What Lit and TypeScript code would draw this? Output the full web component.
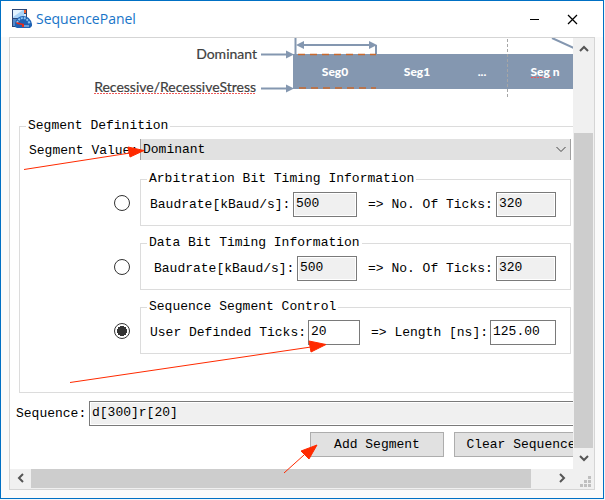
import { LitElement, html, css, svg } from "lit";
import { customElement, state } from "lit/decorators.js";

interface Timing {
  id: string;
  title: string;
  layout: string;
  first: [string, string];
  second: [string, string];
  editable: boolean;
}

const TIMINGS: Timing[] = [
  { id: "arb", title: "Arbitration Bit Timing Information", layout: "arb", first: ["Baudrate[kBaud/s]:", "500"], second: ["=> No. Of Ticks:", "320"], editable: false },
  { id: "data", title: "Data Bit Timing Information", layout: "data", first: ["Baudrate[kBaud/s]:", "500"], second: ["=> No. Of Ticks:", "320"], editable: false },
  { id: "user", title: "Sequence Segment Control", layout: "user", first: ["User Definded Ticks:", "20"], second: ["=> Length [ns]:", "125.00"], editable: true },
];

@customElement("segment-diagram")
class SegmentDiagram extends LitElement {
  static styles = css`
    :host { display: block; height: 70px; }
    svg { display: block; overflow: hidden; }
    .name { font: 14px Lato, "Open Sans", sans-serif; fill: #404040; stroke: #404040; stroke-width: 0.2; text-anchor: end; }
    .seg { font: 900 12px Lato, "Open Sans", sans-serif; fill: #fff; text-anchor: middle; }
    .line { stroke: #8497b0; stroke-width: 2; fill: none; }
    .head, .bar { fill: #8497b0; }
    .dash { stroke: #c8692d; stroke-width: 1.5; stroke-dasharray: 7 5; }
    .split { stroke: #a6a6a6; stroke-dasharray: 3 2; }
    .wave { stroke: #f05a5a; fill: none; stroke-width: 1; stroke-dasharray: 2 1; }
  `;
  render() {
    return html`<svg width="600" height="70" role="img" aria-label="Segment diagram">
      ${svg`
      <rect class="bar" x="283" y="16" width="317" height="35"/>
      <path class="line" stroke-width="1.500" d="M285.500 0V16M366 7V16M290 7H362M251 16.500H278M251 50.500H278M542 0L566 11"/>
      <path class="head" d="M286 7l8-4v8zM367 7l-8-4v8zM284 16.500l-8-4v8zM284 50.500l-8-4v8z"/>
      <path class="dash" d="M288 16.500H366M289 50H366"/>
      <path class="split" d="M497.500 1V60"/>
      <text class="name" x="247" y="21">Dominant</text>
      <text class="name" x="246" y="54">Recessive/RecessiveStress</text>
      <path class="wave" d="M84 55.500H246M521 39.500H541"/>
      <text class="seg" x="325" y="38">Seg0</text>
      <text class="seg" x="407" y="38">Seg1</text>
      <text class="seg" x="472" y="38">...</text>
      <text class="seg" x="535" y="38">Seg n</text>`}
    </svg>`;
  }
}

@customElement("app-root")
class AppRoot extends LitElement {
  @state() private selected = "user";

  static styles = css`
    :host { display: block; height: 100vh; box-sizing: border-box; padding: 0 1px 1px 0; background: #f3f6f9; font: 13px/18px "Liberation Mono", monospace; color: #000; }
    *, *::before, *::after { box-sizing: border-box; }
    button, input, select { font: inherit; color: inherit; margin: 0; border-radius: 0; }
    .window { position: relative; height: 100%; display: flex; flex-direction: column; border: 1px solid #0070c4; background: #fff; overflow: hidden; }
    .titlebar { flex: none; height: 36px; display: flex; align-items: center; padding: 0 12px 0 11px; }
    .appicon { flex: none; width: 21px; height: 21px; }
    .title { flex: 1; margin: 0; padding-left: 3px; font: 14px/20px "Open Sans", sans-serif; color: #1874c8; }
    .winbtn { width: 38px; height: 34px; padding: 0; border: 0; background: none; display: grid; place-items: center; }
    .frame { flex: 1; min-height: 0; padding: 0 8px 8px; background: #fafafa; }
    .panel { height: 100%; display: grid; grid-template: minmax(0, 1fr) 20px / minmax(0, 1fr) 21px; border: 1px solid #d5d5d5; background: #f0f0f0; }
    .view { overflow: hidden; background: #fff; }
    .canvas { width: calc(100% + 30px); }
    fieldset { margin: 0; min-width: 0; border: 1px solid #dcdcdc; }
    legend { padding: 0 2px; height: 18px; }
    .definition { margin: 9px 0 8px 9px; padding: 4px 31px 38px 6px; }
    .settings { display: grid; grid-template-columns: 114px minmax(0, 1fr); row-gap: 8px; align-items: center; }
    .caption { padding-left: 3px; white-space: nowrap; }
    .pick { position: relative; margin-bottom: 2px; }
    .pick select { display: block; width: 100%; height: 21px; padding: 0 2px; border: solid #a0a0a0; border-width: 0 1px; background: #e1e1e1; appearance: none; }
    .pick svg { position: absolute; right: 5px; top: 7px; pointer-events: none; }
    .radio { appearance: none; width: 16px; height: 16px; margin: 9px 10px 0 0; justify-self: end; border: 1px solid #333; border-radius: 50%; background: #fff; }
    .radio:checked { background: radial-gradient(circle, #333 0 5px, #fff 5px); }
    .timing { height: 56px; padding: 4px 6px 8px 9px; }
    .timing legend { margin-left: -3px; }
    .row { display: grid; align-items: center; white-space: nowrap; }
    .arb { grid-template-columns: 143px 64px 139px 60px; }
    .data { grid-template-columns: 143px 60px 139px 60px; padding-left: 4px; }
    .user { grid-template-columns: 158px 52px 130px 66px; }
    .second { margin-left: 11px; }
    .field { width: 100%; height: 25px; padding: 0 2px 2px; border: 1px solid #7a7a7a; background: #fff; outline: 0; }
    .field[readonly] { background: #f0f0f0; box-shadow: inset 0 0 0 1px #fff; }
    .sequence { display: grid; grid-template-columns: 73px minmax(0, 1fr); align-items: center; padding-left: 6px; }
    .actions { display: grid; grid-template-columns: 134px 134px; justify-content: end; gap: 10px; padding: 6px 15px 0 0; }
    .action { height: 25px; padding: 0; border: 1px solid #adadad; background: #e1e1e1; white-space: nowrap; }
    .vbar { display: flex; flex-direction: column; margin-left: 1px; }
    .hbar { display: flex; }
    .arrow { flex: none; width: 21px; height: 21px; padding: 0; border: 0; background: none; display: grid; place-items: center; }
    .hbar .arrow { height: 19px; }
    .vtrack { flex: 1; display: flex; flex-direction: column; justify-content: end; }
    .vthumb { height: 81%; width: 19px; background: #cdcdcd; }
    .htrack { flex: 1; }
    .hthumb { width: 96%; height: 19px; background: #cdcdcd; }
    .grip { place-self: end; margin: 0 3px 2px 0; }
    .notes { position: absolute; left: -1px; top: -1px; pointer-events: none; }
    .ink { stroke: #ff2a00; fill: #ff2a00; }
  `;

  private chevron(d: string) {
    return html`<svg width="11" height="11" fill="none" stroke="#555" stroke-width="2"><path d=${d} /></svg>`;
  }

  private timing(t: Timing) {
    return html`
      <input class="radio" type="radio" name="mode" aria-labelledby="${t.id}-title" .checked=${this.selected === t.id} @change=${() => (this.selected = t.id)} />
      <fieldset class="timing">
        <legend id="${t.id}-title">${t.title}</legend>
        <div class="row ${t.layout}">
          <label for="${t.id}-a">${t.first[0]}</label>
          <input class="field" id="${t.id}-a" .value=${t.first[1]} ?readonly=${!t.editable} />
          <label class="second" for="${t.id}-b">${t.second[0]}</label>
          <input class="field" id="${t.id}-b" .value=${t.second[1]} ?readonly=${!t.editable} />
        </div>
      </fieldset>`;
  }

  render() {
    return html`
      <div class="window">
        <header class="titlebar">
          <svg class="appicon" viewBox="0 0 21 21">
            <rect x="0" y="0" width="15" height="18" fill="#2c4676" />
            <rect x="1" y="1" width="11" height="8" fill="#a9d3f8" />
            <path d="M1 1h10L1 8z" fill="#e2f3ff" />
            <rect x="1" y="10" width="4" height="7" fill="#5689c9" />
            <path d="M12 1h2v3h-2z" fill="#f0602c" />
            <path d="M12 5h2v4h-2z" fill="#d8e8f8" />
            <path d="M3 18V14q2-7 8-7 7 0 9 8v2l-2 2H5z" fill="#1f62b4" />
            <path d="M5 14q2-5 6-5t7 6" fill="none" stroke="#8ec5f2" stroke-width="2" stroke-dasharray="2 1" />
            <path d="M4 13l8 2v3h-2v-2l-5-1z" fill="#ee2b16" />
            <path d="M12 17h5" stroke="#bcdcf8" />
          </svg>
          <h1 class="title">SequencePanel</h1>
          <button class="winbtn" aria-label="Minimize"><svg width="11" height="11"><path d="M1 5.500h9" stroke="#000" /></svg></button>
          <button class="winbtn" aria-label="Close"><svg width="11" height="11"><path d="M1 1l9 9M10 1l-9 9" stroke="#000" stroke-width="1.250" /></svg></button>
        </header>
        <div class="frame">
          <div class="panel">
            <main class="view">
              <div class="canvas">
                <segment-diagram></segment-diagram>
                <fieldset class="definition">
                  <legend>Segment Definition</legend>
                  <div class="settings">
                    <label class="caption" for="value">Segment Value:</label>
                    <div class="pick">
                      <select id="value"><option>Dominant</option><option>Recessive</option><option>RecessiveStress</option></select>
                      <svg width="10" height="7" fill="none" stroke="#444"><path d="M.5 1L5 5.500 9.500 1" /></svg>
                    </div>
                    ${TIMINGS.map((t) => this.timing(t))}
                  </div>
                </fieldset>
                <div class="sequence">
                  <label for="sequence">Sequence:</label>
                  <input class="field" id="sequence" .value=${"d[300]r[20]"} readonly />
                </div>
                <div class="actions">
                  <button class="action">Add Segment</button>
                  <button class="action">Clear Sequence</button>
                </div>
              </div>
            </main>
            <div class="vbar">
              <button class="arrow" aria-label="Scroll up">${this.chevron("M1 8l4-4 4 4")}</button>
              <div class="vtrack"><div class="vthumb"></div></div>
              <button class="arrow" aria-label="Scroll down">${this.chevron("M1 3l4 4 4-4")}</button>
            </div>
            <div class="hbar">
              <button class="arrow" aria-label="Scroll left">${this.chevron("M8 1L4 5l4 4")}</button>
              <div class="htrack"><div class="hthumb"></div></div>
              <button class="arrow" aria-label="Scroll right">${this.chevron("M3 1l4 4-4 4")}</button>
            </div>
            <svg class="grip" width="11" height="11" fill="#bfbfbf">
              <path d="M8 0h3v3h-3zM4 4h3v3h-3zM8 4h3v3h-3zM0 8h3v3h-3zM4 8h3v3h-3zM8 8h3v3h-3z" />
            </svg>
          </div>
        </div>
        <svg class="notes" width="340" height="480" aria-hidden="true">
          <path class="ink" d="M24 169.500L130 153M70 382.500L311 347M284 473L304 455" />
          <path class="ink" stroke="none" d="M144 150.500L128 147l2 10zM326 344.500L309 341l2 11zM317 445L301 451l8 8z" />
        </svg>
      </div>`;
  }
}
